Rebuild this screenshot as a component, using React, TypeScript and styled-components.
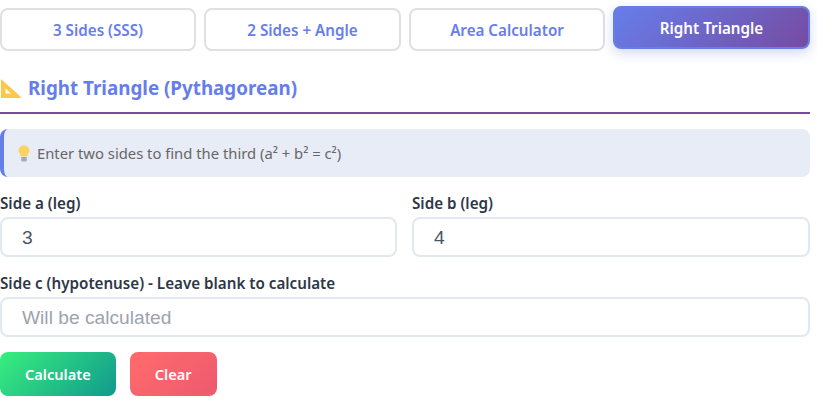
import styled, { createGlobalStyle } from 'styled-components'

const tabs = ['3 Sides (SSS)', '2 Sides + Angle', 'Area Calculator', 'Right Triangle']

export default function App() {
  return (
    <>
      <GlobalStyle />
      <Page>
        <TabRow>
          {tabs.map(tab => (
            <Tab key={tab} $active={tab === 'Right Triangle'}>
              {tab}
            </Tab>
          ))}
        </TabRow>
        <Heading>
          <svg width="22" height="20" viewBox="0 0 22 20" aria-hidden="true">
            <path
              fillRule="evenodd"
              d="M1 1 L21 19 Q21 20 20 20 L1.5 20 Q1 20 1 19.500 Z M5.5 10.500 L5.500 15.500 L11 15.500 Z"
              fill="#fcc84a"
            />
          </svg>
          Right Triangle (Pythagorean)
        </Heading>
        <Info>
          <svg width="12" height="17" viewBox="0 0 12 17" aria-hidden="true">
            <path
              d="M6 .5 C2.8.5.5 2.8.5 5.6 c0 2.6 2 3.600 2.400 6 h6.200 c.4-2.400 2.400-3.400 2.400-6 C11.500 2.800 9.200.5 6 .5Z"
              fill="#fdd35f"
            />
            <path d="M3.200 12 h5.600 v3 q0 1.500-1.500 1.500 h-2.600 q-1.500 0-1.500-1.500Z" fill="#a6adb8" />
          </svg>
          Enter two sides to find the third (a² + b² = c²)
        </Info>
        <FieldRow>
          <Field>
            <Label htmlFor="side-a">Side a (leg)</Label>
            <Input id="side-a" type="text" defaultValue="3" />
          </Field>
          <Field>
            <Label htmlFor="side-b">Side b (leg)</Label>
            <Input id="side-b" type="text" defaultValue="4" />
          </Field>
        </FieldRow>
        <Field>
          <Label htmlFor="side-c">Side c (hypotenuse) - Leave blank to calculate</Label>
          <Input id="side-c" type="text" placeholder="Will be calculated" />
        </Field>
        <Actions>
          <ActionButton $variant="go">Calculate</ActionButton>
          <ActionButton $variant="clear">Clear</ActionButton>
        </Actions>
      </Page>
    </>
  )
}

const GlobalStyle = createGlobalStyle`
  * {
    box-sizing: border-box;
  }

  body {
    margin: 0;
    background: #fff;
    font-family: 'Noto Sans', 'Open Sans', sans-serif;
  }
`

const Page = styled.div`
  width: 810px;
  padding-top: 8px;
`

const TabRow = styled.div`
  display: grid;
  grid-template-columns: 196px 197px 196px 197px;
  gap: 8px;
`

const Tab = styled.button<{ $active: boolean }>`
  height: 43px;
  border: 2px solid ${p => (p.$active ? '#667eea' : '#e0e0e0')};
  border-radius: 8px;
  background: ${p => (p.$active ? 'linear-gradient(135deg, #667eea 0%, #764ba2 100%)' : '#fff')};
  color: ${p => (p.$active ? '#fff' : '#667eea')};
  font-family: inherit;
  font-size: 15.2px;
  font-weight: 600;
  transform: ${p => (p.$active ? 'translateY(-2px)' : 'none')};
  box-shadow: ${p => (p.$active ? '0 4px 12px rgba(102, 126, 234, 0.3)' : 'none')};
`

const Heading = styled.h2`
  display: flex;
  align-items: center;
  gap: 6px;
  height: 51px;
  margin: 12px 0 15px;
  padding-top: 1px;
  border-bottom: 2px solid #764ba2;
  color: #667eea;
  font-size: 18.8px;
  font-weight: 700;
`

const Info = styled.div`
  display: flex;
  align-items: center;
  gap: 7px;
  height: 48px;
  margin-bottom: 16px;
  padding-left: 14px;
  border-left: 4px solid #667eea;
  border-radius: 8px;
  background: #e8ecf7;
  color: #666;
  font-size: 14.8px;
`

const FieldRow = styled.div`
  display: grid;
  grid-template-columns: 397px 398px;
  gap: 15px;
`

const Field = styled.div`
  display: flex;
  flex-direction: column;
  margin-bottom: 16px;
`

const Label = styled.label`
  height: 24px;
  line-height: 20px;
  color: #2d3748;
  font-size: 15.2px;
  font-weight: 600;
`

const Input = styled.input`
  width: 100%;
  height: 40px;
  padding: 2px 20px 0;
  border: 2px solid #e2e8f0;
  border-radius: 8px;
  outline: none;
  color: #4a5568;
  font-family: 'Liberation Sans', Arial, sans-serif;
  font-size: 19.2px;

  &::placeholder {
    color: #9ca3af;
    opacity: 1;
  }
`

const Actions = styled.div`
  display: flex;
  gap: 14px;
  margin-top: -1px;
`

const ActionButton = styled.button<{ $variant: 'go' | 'clear' }>`
  height: 44px;
  padding: 0 25px;
  border: none;
  border-radius: 8px;
  background: ${p =>
    p.$variant === 'go'
      ? 'linear-gradient(135deg, #38ef7d 0%, #11998e 100%)'
      : 'linear-gradient(135deg, #ff6b6b 0%, #ee5a6f 100%)'};
  color: #fff;
  font-family: inherit;
  font-size: 14.6px;
  font-weight: 600;
`
